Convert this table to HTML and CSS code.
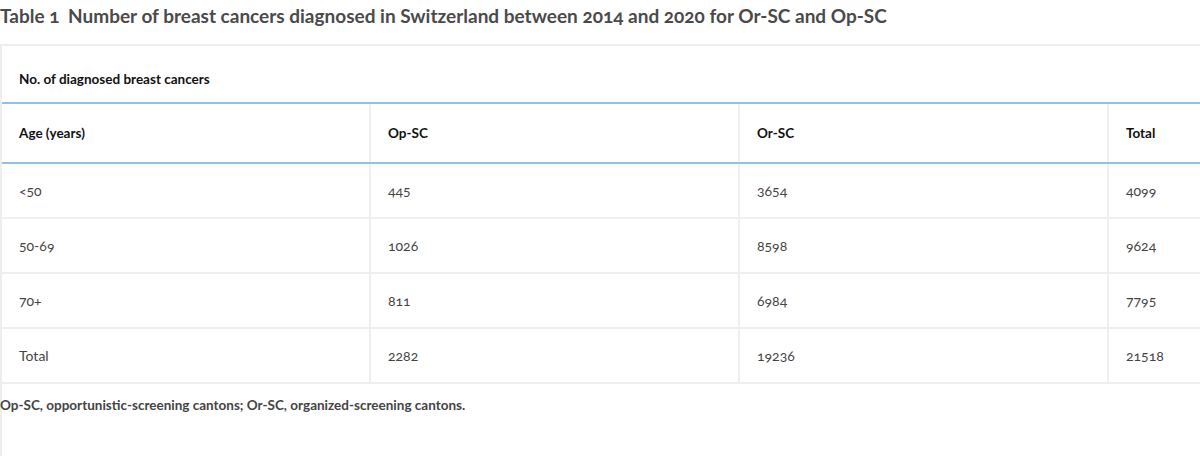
FILE: index.html
```html
<!DOCTYPE html>
<html lang="en">
<head>
<meta charset="utf-8">
<title>Table 1</title>
<link rel="stylesheet" href="styles.css">
</head>
<body>
<h1 class="title"><span class="label">Table 1</span> Number of breast cancers diagnosed in Switzerland between 2014 and 2020 for Or-SC and Op-SC</h1>
<div class="panel">
  <div class="caption">No. of diagnosed breast cancers</div>
  <table class="data">
    <colgroup>
      <col class="c-first">
      <col class="c-col">
      <col class="c-col">
      <col class="c-col">
    </colgroup>
    <thead>
      <tr><th>Age (years)</th><th>Op-SC</th><th>Or-SC</th><th>Total</th></tr>
    </thead>
    <tbody>
      <tr><td>&lt;50</td><td>445</td><td>3654</td><td>4099</td></tr>
      <tr><td>50-69</td><td>1026</td><td>8598</td><td>9624</td></tr>
      <tr><td>70+</td><td>811</td><td>6984</td><td>7795</td></tr>
      <tr><td>Total</td><td>2282</td><td>19236</td><td>21518</td></tr>
    </tbody>
  </table>
  <p class="note">Op-SC, opportunistic-screening cantons; Or-SC, organized-screening cantons.</p>
</div>
</body>
</html>
```
FILE: styles.css
```css
html, body {
  margin: 0;
  padding: 0;
  background: #fff;
  overflow: hidden;
  width: 1200px;
  height: 456px;
}
body {
  font-family: Lato, "Open Sans", sans-serif;
  font-variant-numeric: oldstyle-nums;
  color: #444;
}
.title {
  margin: 0;
  height: 44px;
  padding-top: 4px;
  box-sizing: border-box;
  font-size: 19px;
  font-weight: 700;
  color: #4a4a4a;
  white-space: nowrap;
}
.label {
  margin-right: 4px;
}
.panel {
  border-top: 2px solid #eeeeee;
  border-left: 2px solid #eeeeee;
  height: 410px;
  width: 1476px;
}
.caption {
  height: 58px;
  box-sizing: border-box;
  padding: 25px 0 0 17px;
  font-size: 13.5px;
  font-weight: 700;
  color: #111;
  border-bottom: 2px solid #93bee6;
}
.data {
  border-collapse: collapse;
  table-layout: fixed;
  width: 1475px;
}
.c-first {
  width: 368px;
}
.c-col {
  width: 369px;
}
.data th,
.data td {
  text-align: left;
  padding: 0 0 0 17px;
  border-right: 2px solid #f0eeee;
}
.data th {
  height: 58px;
  font-size: 13.5px;
  font-weight: 700;
  color: #111;
  border-bottom: 2px solid #93bee6;
}
.data td {
  height: 53px;
  font-size: 14px;
  font-weight: 400;
  color: #444;
  border-bottom: 2px solid #f0eeee;
}
.note {
  margin: 0;
  padding: 13px 0 0 0;
  margin-left: -2px;
  font-size: 13.5px;
  font-weight: 700;
  color: #444;
}
```
